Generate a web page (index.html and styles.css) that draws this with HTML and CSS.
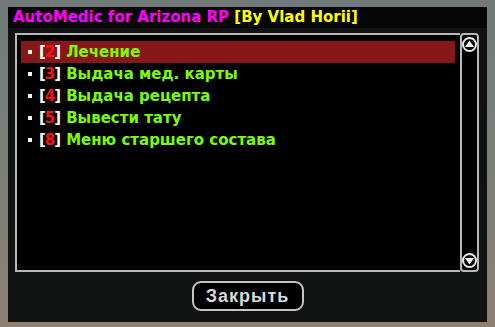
FILE: index.html
```html
<!DOCTYPE html>
<html>
<head>
<meta charset="utf-8">
<link rel="stylesheet" href="styles.css">
</head>
<body>
<div class="scene">
  <div class="dialog">
    <div class="title"><span class="t-pink">AutoMedic for Arizona RP</span> <span class="t-yellow">[By Vlad Horii]</span></div>
    <div class="body">
      <div class="listwrap">
        <div class="list">
          <div class="row sel"><span class="dot"></span><span class="br">[</span><span class="num">2</span><span class="br">]</span><span class="txt">Лечение</span></div>
          <div class="row"><span class="dot"></span><span class="br">[</span><span class="num">3</span><span class="br">]</span><span class="txt">Выдача мед. карты</span></div>
          <div class="row"><span class="dot"></span><span class="br">[</span><span class="num">4</span><span class="br">]</span><span class="txt">Выдача рецепта</span></div>
          <div class="row"><span class="dot"></span><span class="br">[</span><span class="num">5</span><span class="br">]</span><span class="txt">Вывести тату</span></div>
          <div class="row"><span class="dot"></span><span class="br">[</span><span class="num">8</span><span class="br">]</span><span class="txt">Меню старшего состава</span></div>
        </div>
        <div class="scroll">
          <svg class="arrow" width="15" height="15" viewBox="0 0 15 15"><circle cx="7.5" cy="7.5" r="6.5" fill="#000" stroke="#e8e8e8" stroke-width="2"/><path d="M3 10 L7.5 3.5 L12 10 Z" fill="#f2f2f2"/></svg>
          <svg class="arrow" width="15" height="15" viewBox="0 0 15 15"><circle cx="7.5" cy="7.5" r="6.5" fill="#000" stroke="#e8e8e8" stroke-width="2"/><path d="M3 5 L7.5 11.5 L12 5 Z" fill="#f2f2f2"/></svg>
        </div>
      </div>
      <div class="btnrow"><div class="btn">Закрыть</div></div>
    </div>
  </div>
</div>
</body>
</html>
```
FILE: styles.css
```css
html, body { margin: 0; padding: 0; }
body {
  width: 495px; height: 327px; overflow: hidden;
  background: linear-gradient(180deg, #717a79 0%, #7b7f7a 50%, #8e8070 100%);
}
.scene { padding: 7px 0 0 8px; }
.dialog {
  width: 479px; height: 315px;
  background: #111312;
  display: flex; flex-direction: column;
}
.title {
  height: 21px; background: #060606;
  font-family: "DejaVu Sans", sans-serif; font-weight: bold;
  font-size: 15px; line-height: 21px;
  padding-left: 5px; white-space: nowrap;
}
.t-pink { color: #ff00ff; }
.t-yellow { color: #ffff00; }
.body { flex: 1; display: flex; flex-direction: column; padding: 5px 5px 0 7px; }
.listwrap { display: flex; height: 239px; }
.list {
  width: 445px; border: 2px solid #b9b9b9; border-right: none;
  background: #000; padding: 6px 0 0 4px; box-sizing: border-box;
}
.row {
  height: 22px; width: 434px; display: flex; align-items: center;
  font-family: "DejaVu Sans", sans-serif; font-weight: bold; font-size: 15px;
  white-space: nowrap;
}
.row.sel { background: #86181a; }
.dot { width: 4px; height: 4px; background: #f4f4f4; margin: 0 7px 0 7px; }
.br { color: #ffffff; }
.num { color: #ff1010; margin: 0 -1px; }
.txt { color: #7cfc00; margin-left: 5px; }
.scroll {
  width: 19px; box-sizing: border-box; border: 2px solid #b9b9b9; border-radius: 4px;
  background: #000; display: flex; flex-direction: column; justify-content: space-between;
  align-items: center; padding: 2px 0;
}
.arrow { display: block; }
.btnrow { display: flex; justify-content: center; padding-top: 9px; padding-right: 2px; }
.btn {
  width: 112px; height: 30px; box-sizing: border-box;
  border: 2px solid #c4c4c4; border-radius: 9px; background: #000;
  color: #d9d9d9; font-family: "Liberation Sans", sans-serif; font-weight: bold; font-size: 18px;
  display: flex; align-items: center; justify-content: center; letter-spacing: 1px;
}
```
